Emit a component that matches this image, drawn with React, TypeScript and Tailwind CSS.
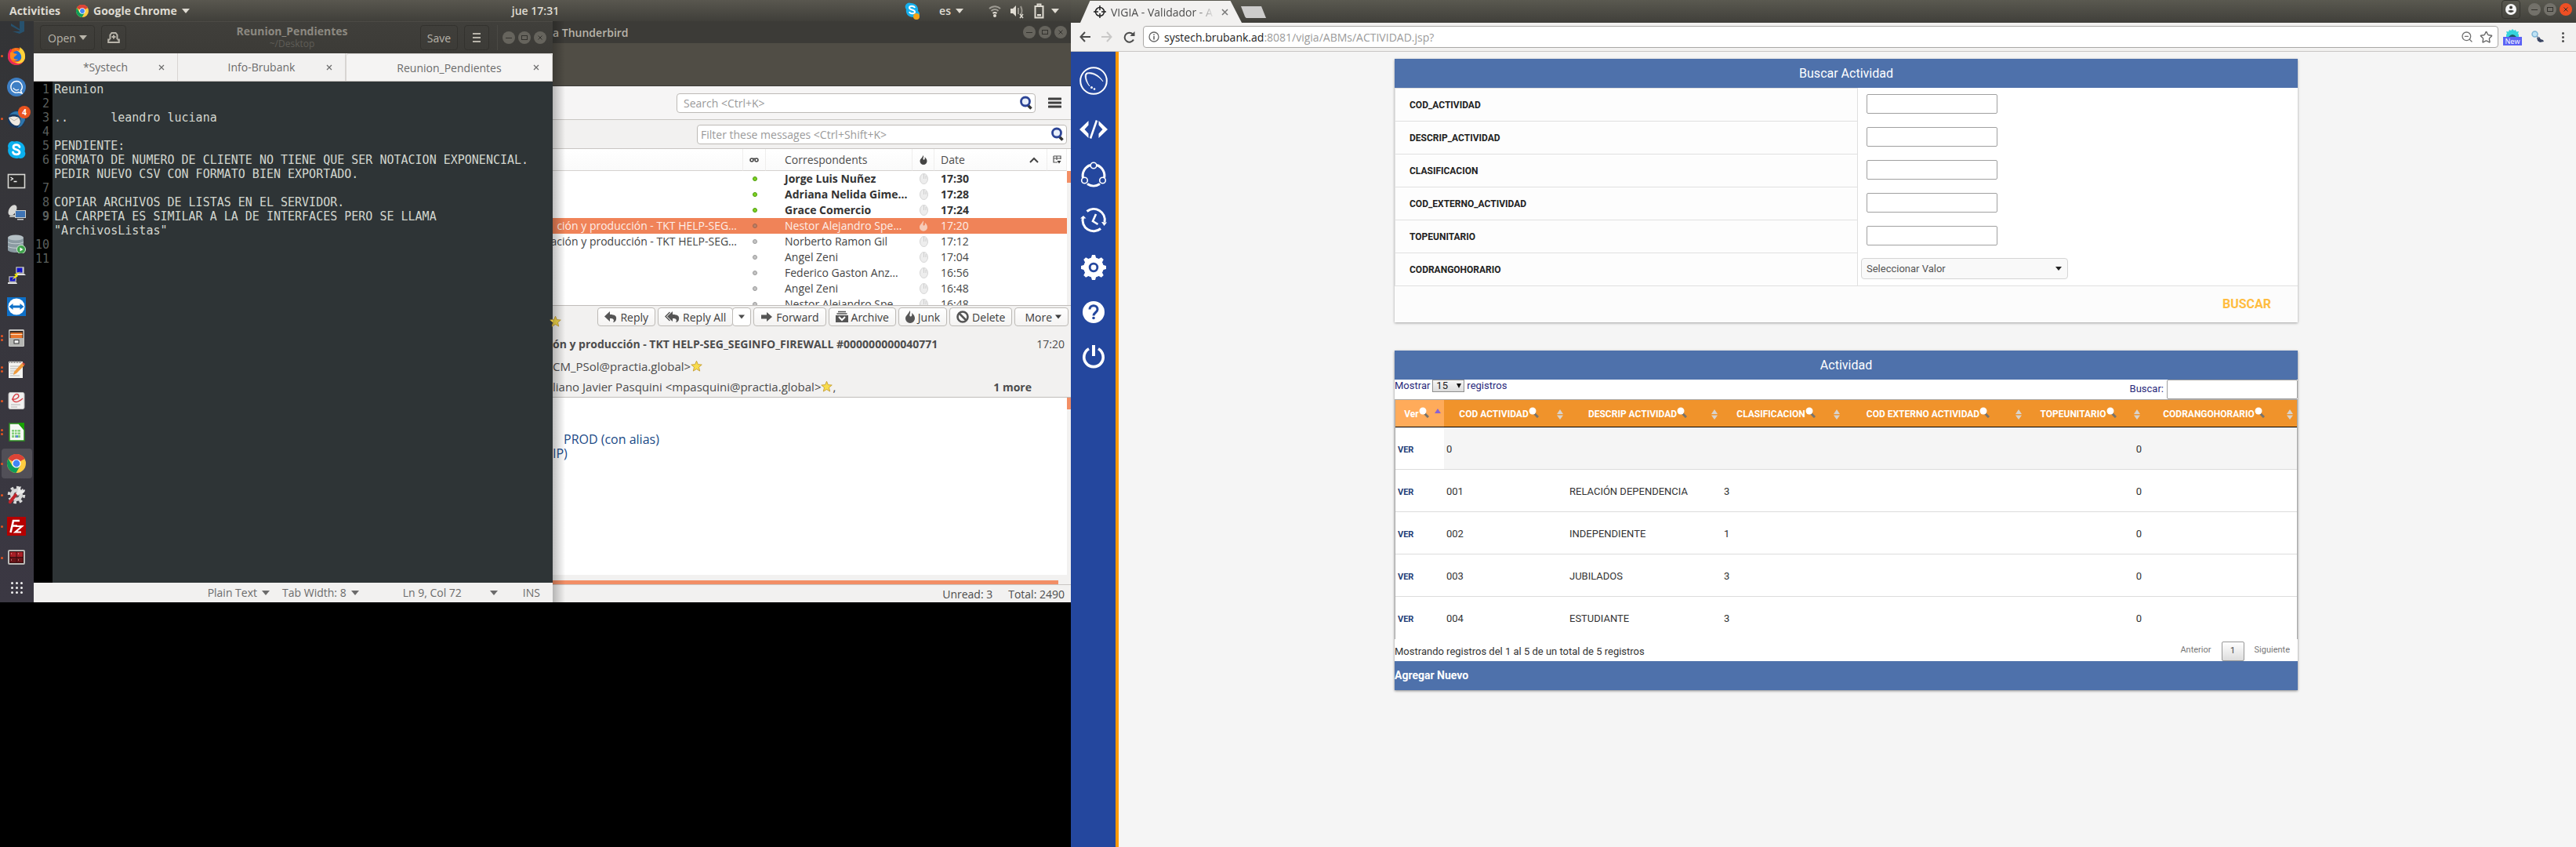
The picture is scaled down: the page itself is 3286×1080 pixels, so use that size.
import React from "react";
import { ZoomOut, Star } from "lucide-react";

type Kids = { children?: React.ReactNode };

/* ---------- shared small drawings ---------- */

function Caret({ className = "" }: { className?: string }) {
  return (
    <svg width="10" height="6" viewBox="0 0 10 6" className={"shrink-0 " + className} aria-hidden="true">
      <path d="M0 0h10L5 6z" fill="currentColor" />
    </svg>
  );
}

function ChromeLogo({ size }: { size: number }) {
  return (
    <svg width={size} height={size} viewBox="0 0 24 24" aria-hidden="true">
      <circle cx="12" cy="12" r="12" fill="#ffcd40" />
      <path d="M12 12 1.6 6A12 12 0 0 1 22.4 6z" fill="#db4437" />
      <path d="M12 0a12 12 0 0 1 10.4 6.5H12L6.5 9 1.6 6A12 12 0 0 1 12 0z" fill="#db4437" />
      <path d="M1.6 6A12 12 0 0 0 11.5 24l5.2-9.2-4.7 2L6.8 15z" fill="#0f9d58" />
      <circle cx="12" cy="12" r="5.6" fill="#fff" />
      <circle cx="12" cy="12" r="4.4" fill="#4285f4" />
    </svg>
  );
}

function WindowButtons({ tone }: { tone: "dim" | "active" }) {
  const face = tone === "dim" ? "#66645d" : "#73716a";
  const mark = "#33322e";
  return (
    <div className="flex gap-1">
      {["Minimize", "Maximize", "Close"].map((name, i) => (
        <button key={name} aria-label={name} className="block size-4">
          <svg width="16" height="16" viewBox="0 0 16 16">
            <circle cx="8" cy="8" r="8" fill={tone === "active" && i === 2 ? "#ee4f24" : face} />
            {i === 0 && <path d="M4 8.5h8" stroke={mark} />}
            {i === 1 && <rect x="4.500" y="5.500" width="7" height="5" fill="none" stroke={mark} />}
            {i === 2 && <path d="m5.500 5.500 5 5m0-5-5 5" stroke={mark} fill="none" />}
          </svg>
        </button>
      ))}
    </div>
  );
}

/* ---------- top bar ---------- */

function TopBar() {
  return (
    <header className="grid h-[27px] grid-cols-3 items-center bg-gradient-to-b from-[#59574f] to-[#403f3a] text-[14px] font-semibold text-[#dfdbd2]">
      <div className="flex items-center gap-5 pl-3 font-bold">
        <button>Activities</button>
        <button className="flex items-center gap-1.5">
          <ChromeLogo size={16} />
          Google Chrome
          <Caret />
        </button>
      </div>
      <div className="text-center">jue 17:31</div>
      <div className="flex items-center justify-end pr-[15px]">
        <svg width="20" height="24" viewBox="0 0 20 24" className="mr-6" role="img" aria-label="Skype">
          <path d="M1 5a5 5 0 0 1 7-3c6 0 10 5 9 10a5 5 0 0 1-6 8C4 20 1 15 2 10a5 5 0 0 1-1-5z" fill="#16b0ee" />
          <path d="M13 8c-1-3-7-3-7 0s7 2 7 5-6 3-7 0" fill="none" stroke="#fff" strokeWidth="2" />
          <circle cx="15" cy="19" r="4" fill="#f5a316" />
        </svg>
        <button className="mr-8 flex items-center gap-1.5">
          es
          <Caret />
        </button>
        <svg width="90" height="22" viewBox="0 0 90 22" role="img" aria-label="Network, sound and battery">
          <g fill="none" stroke="#dfdbd2" strokeWidth="2">
            <path d="M1 8a10 10 0 0 1 14 0M3.500 11a6 6 0 0 1 9 0" opacity=".55" />
            <path d="M5.500 14a4 4 0 0 1 5 0" />
            <path d="M38 7v8M41 5q3 6 0 11" opacity=".5" />
            <path d="m40 15 4 5m0-5-4 5" strokeWidth="1.500" />
            <path d="M59.500 5h10v14.500h-10zM62.500 4V2.500h4V4" />
          </g>
          <circle cx="8" cy="17" r="2" fill="#dfdbd2" />
          <path d="M28 8h3l4-4v14l-4-4h-3z" fill="#dfdbd2" />
          <path d="M62 15h5v2.500h-5z" fill="#dfdbd2" />
          <path d="M80 8h10l-5 6z" fill="#dfdbd2" />
        </svg>
      </div>
    </header>
  );
}

/* ---------- dock ---------- */

const dockItems: { name: string; dots: number; art: React.ReactNode; active?: boolean; badge?: string }[] = [
  {
    name: "Firefox",
    dots: 1,
    art: (
      <>
        <circle cx="12" cy="13" r="11" fill="#ff6a1a" />
        <path d="M1 13a11 11 0 0 0 20 6C14 24 6 22 4 15c-1-4 0-8 2-9L5 3C2 5 1 9 1 13z" fill="#e8265f" />
        <circle cx="12.500" cy="12.500" r="6.500" fill="#1f6fd6" />
        <path d="M9 3c3 0 4 3 6 4 2 2 4 5 3 9-1 3-4 5-8 4 6 5 14 0 13-8C23 6 19 3 16 1c1 2 0 4-1 5z" fill="#ffd23a" />
        <path d="M4 8c3-1 4 0 5 1l4 1-3 3c-3 1-1 5 4 3-3 4-9 2-10-2z" fill="#ff8a1f" />
      </>
    ),
  },
  {
    name: "Quassel",
    dots: 0,
    art: (
      <>
        <circle cx="12" cy="12" r="12" fill="#3e7fc4" />
        <path d="M12 4.500a7.300 7.300 0 1 0 3 14l4 1.500-1.500-3.500A7.300 7.300 0 0 0 12 4.500z" fill="none" stroke="#fff" strokeWidth="1.400" />
        <path d="M8 13a4.500 4.500 0 0 0 7 2" fill="none" stroke="#e6effa" strokeWidth="1.400" />
      </>
    ),
  },
  {
    name: "Thunderbird",
    dots: 1,
    badge: "4",
    art: (
      <>
        <circle cx="12" cy="13" r="11" fill="#17375e" />
        <path d="M3 8C8 1 18 2 22 8l1 6c-3 6-5 9-10 10 4-4 6-9 3-14-3-4-9-4-13-2z" fill="#2f77ad" />
        <path d="M2 11c4-2 9-2 13 0 3 4 2 8-1 10-5 1-10-3-12-10z" fill="#efe9e0" />
        <path d="m3 11 6 4 6-4" fill="none" stroke="#b9b2a8" />
      </>
    ),
  },
  {
    name: "Skype",
    dots: 0,
    art: (
      <>
        <path d="M1 7A6 6 0 0 1 9 1.500 10.500 10.500 0 0 1 22.500 14 6 6 0 0 1 15 22.500 10.500 10.500 0 0 1 1.500 10z" fill="#0bb0ee" />
        <path d="M16 8.500c-1-4-8-3.500-8 0 0 4 8 2.500 8 6.500 0 3.500-7.500 4-8.500 0" fill="none" stroke="#fff" strokeWidth="2.800" strokeLinecap="round" />
      </>
    ),
  },
  {
    name: "Terminal",
    dots: 0,
    art: (
      <>
        <rect x="1.500" y="3.500" width="21" height="17" fill="#2b2b2b" stroke="#d8d8d4" strokeWidth="1.600" />
        <path d="m4.500 7 3 2-3 2M8.500 12.500h4" fill="none" stroke="#f2f2f2" strokeWidth="1.300" />
      </>
    ),
  },
  {
    name: "Remmina",
    dots: 0,
    art: (
      <>
        <ellipse cx="7" cy="9" rx="4.500" ry="7.500" transform="rotate(32 7 9)" fill="#d9d9d6" />
        <path d="M4 15h7v3H3z" fill="#b9bab7" />
        <rect x="10.500" y="9.500" width="13" height="9" fill="#3e74b5" stroke="#ccd0d0" />
        <path d="M13 20h8v1.500h-8z" fill="#ccd0d0" />
      </>
    ),
  },
  {
    name: "Database tool",
    dots: 0,
    art: (
      <>
        <path d="M1 4v16c2 4 18 4 20 0V4z" fill="#8b9aa2" />
        <ellipse cx="11" cy="4" rx="10" ry="3.500" fill="#b5c0c5" />
        <path d="M1 9.500c3 3 17 3 20 0M1 15c3 3 17 3 20 0" fill="none" stroke="#c6d0d4" />
        <circle cx="18" cy="19" r="5.500" fill="#3fa24c" stroke="#cfe8d2" />
        <path d="m16.500 16.500 4 2.500-4 2.500z" fill="#fff" />
      </>
    ),
  },
  {
    name: "PuTTY",
    dots: 0,
    art: (
      <>
        <path d="M11 1h11v9H11zM2 13h10v8H2z" fill="#c9c9c9" stroke="#333" strokeWidth=".6" />
        <path d="M12.500 2.500h7v6h-7zM3.500 14.500h7v5h-7z" fill="#1212c8" />
        <path d="M13 10h9l2 2H12zM1 21h11l1 2H1z" fill="#e2e2e2" />
        <path d="m18 7-6 4 2 2-8 5 5-6-2-1z" fill="#fff200" />
      </>
    ),
  },
  {
    name: "TeamViewer",
    dots: 0,
    art: (
      <>
        <rect width="24" height="24" fill="#0e70c8" />
        <circle cx="12" cy="12" r="10.500" fill="#fff" />
        <path d="m2.500 12 5-4v2.500h9V8l5 4-5 4v-2.500h-9V16z" fill="#0e70c8" />
      </>
    ),
  },
  {
    name: "Files",
    dots: 2,
    art: (
      <>
        <rect x="2" y="1" width="20" height="22" rx="1.500" fill="#c8c8c5" />
        <rect x="3.500" y="3" width="17" height="9" fill="#3a2a20" />
        <path d="M4.500 5h15v7h-15z" fill="#e8762b" />
        <path d="M4.500 7.500h15" stroke="#ffe3c4" />
        <rect x="3" y="12" width="18" height="10" fill="#b4b5b2" />
        <rect x="9" y="14.500" width="6" height="4.500" fill="#eee" stroke="#333" />
      </>
    ),
  },
  {
    name: "Text Editor",
    dots: 2,
    art: (
      <>
        <rect x="2" y="2" width="18" height="21" fill="#f4f4f1" />
        <path d="M3 2.500h16" stroke="#777" strokeWidth="3" strokeDasharray="1 1" />
        <path d="M4 8h12M4 11h10M4 14h8M4 17h5M4 20h12" stroke="#b4b4b0" />
        <path d="m8 19 1-4L19 4l3 3-10 10z" fill="#ef9a3c" />
        <path d="m19 4 1-1 3 2-1 2z" fill="#d9463e" />
      </>
    ),
  },
  {
    name: "Document Viewer",
    dots: 1,
    art: (
      <>
        <rect x="2" y="1.500" width="20" height="21" rx="2" fill="#f0f0ef" stroke="#bbb" />
        <path d="M6 10c6 1 11-3 8-6-4-2-8 5-6 8 3 3 8 1 12-3" fill="none" stroke="#d8434a" strokeWidth="1.500" />
        <path d="M5 17h12M5 20h8" stroke="#b5b5b5" />
      </>
    ),
  },
  {
    name: "LibreOffice Calc",
    dots: 2,
    art: (
      <>
        <path d="M3 1h12l7 8v14H3z" fill="#f6f9f4" stroke="#2a8a1e" strokeWidth="1.500" />
        <path d="M14 0h8v10z" fill="#18a303" />
        <rect x="6" y="9" width="11" height="10" fill="#86cf7c" />
        <path d="M6 12h11M6 15.500h11M9.500 9v10M13 9v10" stroke="#fff" strokeWidth=".8" />
        <path d="M11 19v-3h3v3z" fill="#5b8ad0" />
      </>
    ),
  },
  { name: "Google Chrome", dots: 1, active: true, art: null },
  {
    name: "Settings",
    dots: 1,
    art: (
      <>
        <circle cx="12" cy="12" r="8" fill="#d9d9d9" />
        <circle cx="12" cy="12" r="9.500" fill="none" stroke="#d9d9d9" strokeWidth="3.500" strokeDasharray="3.700 3.700" />
        <circle cx="12" cy="12" r="3.500" fill="#5a5a5e" />
        <path d="m2 20 9-11 3 2L5 23c-2 1-4-1-3-3z" fill="#c02229" />
        <path d="m11 10 3-3c-1-3 1-5 4-6l-1 4 3 2 3-2c0 4-3 6-6 5l-3 3z" fill="#e9e9e9" />
      </>
    ),
  },
  {
    name: "FileZilla",
    dots: 1,
    art: (
      <>
        <rect width="24" height="24" fill="#b50000" />
        <g fill="none" stroke="#fff" strokeWidth="2.600">
          <path d="M16 5H8L4.500 20M6.500 11.500H13" />
          <path d="M11 12h8l-8.500 7.500H18" strokeWidth="2.200" />
        </g>
      </>
    ),
  },
  {
    name: "Terminator",
    dots: 1,
    art: (
      <>
        <rect x="1" y="2" width="22" height="19" rx="2" fill="#b9b9b6" />
        <rect x="3" y="4" width="18" height="15" fill="#3a0d10" />
        <path d="M4 5h7.500v6H4zM12.500 5H20v6h-7.500z" fill="#a81f26" />
        <path d="M4 12h7.500v6H4zM12.500 12H20v6h-7.500z" fill="#6a1418" />
        <path d="M5 7h1M14 7h1M5 15h1M14 15h1" stroke="#f0c0c0" />
      </>
    ),
  },
];

function Dock() {
  return (
    <nav aria-label="Dock" className="flex w-[43px] shrink-0 flex-col bg-gradient-to-b from-[#333436] to-[#3b3843]">
      <button aria-label="Visual Studio Code" className="flex h-6 items-start justify-center opacity-50">
        <svg width="20" height="16" viewBox="0 0 20 16">
          <path d="M2 3 13 10V0h6v13l-6 3-9-3h9v-1L2 6z" fill="#1d6fa5" />
        </svg>
      </button>
      {dockItems.map((item) => (
        <button
          key={item.name}
          aria-label={item.name}
          className="relative grid h-10 grid-cols-[9px_24px] items-center"
        >
          {item.active && <span className="absolute inset-x-0.5 inset-y-px rounded bg-white/12" />}
          <span className="relative flex flex-col items-center gap-0.5 pr-1">
            {Array.from({ length: item.dots }, (_, i) => (
              <span key={i} className="size-[3px] rounded-full bg-[#e95420]" />
            ))}
          </span>
          <span className="relative block">
            {item.art ? (
              <svg width="24" height="24" viewBox="0 0 24 24" aria-hidden="true">
                {item.art}
              </svg>
            ) : (
              <ChromeLogo size={24} />
            )}
            {item.badge && (
              <span className="absolute -top-1 left-3.5 flex size-4 items-center justify-center rounded-full bg-[#e95420] text-[10px] font-bold text-white">
                {item.badge}
              </span>
            )}
          </span>
        </button>
      ))}
      <button aria-label="Show Applications" className="grid flex-1 grid-cols-[3px_3px_3px] content-center justify-center gap-[3px]">
        {Array.from({ length: 9 }, (_, i) => (
          <span key={i} className="size-[3px] rounded-full bg-[#f2f2f2]" />
        ))}
      </button>
    </nav>
  );
}

/* ---------- text editor ---------- */

const noteText = `Reunion

..      leandro luciana

PENDIENTE:
FORMATO DE NUMERO DE CLIENTE NO TIENE QUE SER NOTACION EXPONENCIAL. PEDIR NUEVO CSV CON FORMATO BIEN EXPORTADO.

COPIAR ARCHIVOS DE LISTAS EN EL SERVIDOR.
LA CARPETA ES SIMILAR A LA DE INTERFACES PERO SE LLAMA "ArchivosListas"

`;

function EditorTab({ name, className, selected }: { name: string; className: string; selected?: boolean }) {
  return (
    <div
      className={
        "flex items-center border-r border-[#d8d5d2] pr-4 pl-6 " +
        className +
        (selected ? " rounded-t border-t border-l bg-[#f5f4f3]" : "")
      }
    >
      <button className="flex-1 text-center">{name}</button>
      <button aria-label={"Close " + name} className="size-2">
        <svg width="8" height="8" viewBox="0 0 8 8">
          <path d="m1 1 6 6m0-6L1 7" stroke="#6b6b6b" strokeWidth="1.200" />
        </svg>
      </button>
    </div>
  );
}

function TextEditor() {
  return (
    <section aria-label="Text Editor" className="flex w-[662px] shrink-0 flex-col">
      <div className="flex h-[41px] items-center border-t border-[#4c4a45] bg-gradient-to-b from-[#403f3b] to-[#3c3b37] pr-2 pl-2 text-[#b8b4aa]">
        <button className="flex h-8 w-[70px] items-center justify-center gap-1 rounded border border-[#33322e] text-[14px]">
          Open
          <Caret />
        </button>
        <button aria-label="New document" className="ml-2 flex h-8 w-8 items-center justify-center rounded border border-[#33322e]">
          <svg width="16" height="15" viewBox="0 0 16 15" fill="none" stroke="currentColor" strokeWidth="2">
            <path d="M3.500 9V3.500L5.500 1h5l2 2.500V9" />
            <path d="M8 3.500v5M5.500 6h5M3.500 9.500H1.200V13h13.600V9.500h-2.300" />
          </svg>
        </button>
        <div className="flex-1 pl-12 text-center">
          <div className="text-[14px] leading-4 font-bold text-[#8c8981]">Reunion_Pendientes</div>
          <div className="text-[12px] leading-4 text-[#5f5d57]">~/Desktop</div>
        </div>
        <button className="h-8 w-12 rounded border border-[#33322e] text-[14px]">Save</button>
        <button aria-label="Menu" className="mx-2 flex h-8 w-8 items-center justify-center rounded border border-[#33322e]">
          <svg width="10" height="12" viewBox="0 0 10 12">
            <path d="M0 1h10M0 6h10M0 11h10" stroke="currentColor" strokeWidth="2" />
          </svg>
        </button>
        <div className="ml-0.5 border-l border-[#4a4944] py-2 pl-1.5">
          <WindowButtons tone="dim" />
        </div>
      </div>
      <div className="flex h-9 border-b border-[#c8c4c0] bg-[#f2f1f0] text-[14px] text-[#6b6b6b]">
        <EditorTab name="*Systech" className="w-[184px]" />
        <EditorTab name="Info-Brubank" className="w-[214px]" />
        <EditorTab name="Reunion_Pendientes" className="flex-1" selected />
      </div>
      <div className="flex flex-1 bg-[#2e3436] font-['DejaVu_Sans_Mono',monospace] text-[15px] leading-[18px]">
        <pre className="w-6 bg-black pt-px pr-1 text-right font-['DejaVu_Sans_Mono',monospace] text-[#5b5f5d]">
          {"1\n2\n3\n4\n5\n6\n\n7\n8\n"}
          <b>9</b>
          {"\n\n10\n11"}
        </pre>
        <textarea
          aria-label="Reunion_Pendientes"
          spellCheck={false}
          defaultValue={noteText}
          className="block flex-1 resize-none overflow-hidden bg-transparent pt-px pl-0.5 text-[#d3d7cf] outline-none"
        />
      </div>
      <div className="flex h-[25px] items-center justify-end gap-4 bg-[#f2f1f0] pr-4 text-[14px] text-[#6b6b6b]">
        <button className="flex items-center gap-1.5">
          Plain Text
          <Caret />
        </button>
        <button className="flex items-center gap-1.5">
          Tab Width: 8
          <Caret />
        </button>
        <button className="ml-10 flex items-center gap-9">
          Ln 9, Col 72
          <Caret />
        </button>
        <span className="ml-4">INS</span>
      </div>
    </section>
  );
}

/* ---------- mail ---------- */

function Lens() {
  return (
    <svg width="18" height="18" viewBox="0 0 18 18" className="shrink-0" aria-hidden="true">
      <path d="m11 12 4.500 4.500" stroke="#333" strokeWidth="3.500" />
      <circle cx="8" cy="7.500" r="5.500" fill="#e8effa" stroke="#2d4596" strokeWidth="2.800" />
    </svg>
  );
}

function Flame({ color, className = "" }: { color: string; className?: string }) {
  return (
    <svg width="12" height="16" viewBox="0 0 12 16" className={className} aria-hidden="true">
      <path d="M5.500 0c2 3-1.500 5 .5 7.500C8 8 9 6 8 3c3 2 4 5 4 7a6 6 0 0 1-12 0c0-4 4-5 5.500-10z" fill={color} />
    </svg>
  );
}

function JunkDot() {
  return (
    <svg width="11" height="14" viewBox="0 0 11 14" aria-hidden="true">
      <ellipse cx="5.500" cy="7" rx="5" ry="6.500" fill="#ededed" stroke="#d4d4d4" />
      <path d="M5.500 1v6M8 3v4" stroke="#cfcfcf" />
    </svg>
  );
}

function GoldStar() {
  return (
    <svg width="15" height="16" viewBox="0 0 16 16" className="shrink-0" aria-hidden="true">
      <path d="m8 .8 2 4.700 5.200.4-4 3.400 1.300 5.200L8 11.800l-4.500 2.700 1.300-5.200-4-3.400L6 5.500z" fill="#f8dc4c" stroke="#c39a2c" strokeWidth=".9" />
    </svg>
  );
}

const subject = "ción y producción - TKT HELP-SEG…";
const mails = [
  { from: "Jorge Luis Nuñez", time: "17:30", unread: true },
  { from: "Adriana Nelida Gime…", time: "17:28", unread: true },
  { from: "Grace Comercio", time: "17:24", unread: true },
  { from: "Nestor Alejandro Spe…", time: "17:20", subject, selected: true },
  { from: "Norberto Ramon Gil", time: "17:12", subject: "a" + subject },
  { from: "Angel Zeni", time: "17:04" },
  { from: "Federico Gaston Anz…", time: "16:56" },
  { from: "Angel Zeni", time: "16:48" },
  { from: "Nestor Alejandro Spe…", time: "16:48" },
];

function MailButton({ children, label }: Kids & { label: string }) {
  return (
    <button className="flex h-6 items-center gap-1 rounded-sm border border-[#bdbab6] bg-gradient-to-b from-white to-[#f4f3f2] px-2 text-[14px] text-[#3c3c3c]">
      {children}
      {label}
    </button>
  );
}

function Reply({ all }: { all?: boolean }) {
  return (
    <svg width={all ? 19 : 16} height="16" viewBox={all ? "-3 0 19 16" : "0 0 16 16"} fill="#555" aria-hidden="true">
      <path d="M7 1v4c6 0 9 2 8 6 0 2-2 4-4 4 2-3 1-5-4-5v4L0 7.500z" />
      {all && <path d="M3.500 2-2 7.500 3.500 13" fill="none" stroke="#555" strokeWidth="1.500" />}
    </svg>
  );
}

function Mail() {
  return (
    <section aria-label="Mail" className="relative flex min-w-0 flex-1 flex-col bg-[#f2f1f0] text-[14px] text-[#4c4c4c]">
      <div className="pointer-events-none absolute inset-y-0 left-0 w-4 bg-gradient-to-r from-black/25 to-transparent" />
      <div className="flex h-7 items-center justify-between bg-[#3c3b37] pr-[5px] font-semibold text-[#b8b4aa]">
        <span>a Thunderbird</span>
        <WindowButtons tone="dim" />
      </div>
      <div className="h-[55px] border-b border-[#3c3b37] bg-[#504d45]" />
      <div className="flex h-[43px] items-center justify-end gap-4 border-b border-[#c9c6c3] bg-[#f6f5f5] pr-3">
        <label className="flex h-[25px] w-[458px] items-center rounded-sm border border-[#bdbab6] bg-white pr-0.5 pl-2">
          <input aria-label="Search" placeholder="Search <Ctrl+K>" className="min-w-0 flex-1 outline-none placeholder:text-[#9a9a9a]" />
          <Lens />
        </label>
        <button aria-label="Application menu">
          <svg width="17" height="14" viewBox="0 0 17 14">
            <path d="M1 2h15M1 7h15M1 12h15" stroke="#3f3f3f" strokeWidth="3" strokeLinecap="round" />
          </svg>
        </button>
      </div>
      <div className="flex h-[37px] items-center justify-end border-b border-[#c9c6c3] pr-[5px]">
        <label className="flex h-[25px] w-[472px] items-center rounded-sm border border-[#bdbab6] bg-white pr-0.5 pl-1">
          <input aria-label="Filter" placeholder="Filter these messages <Ctrl+Shift+K>" className="min-w-0 flex-1 outline-none placeholder:text-[#9a9a9a]" />
          <Lens />
        </label>
      </div>
      <div className="flex h-[200px] overflow-hidden border-b border-[#c0bdba] bg-white">
        <table className="w-full table-fixed self-start border-separate border-spacing-0">
          <colgroup>
            <col />
            <col className="w-[29px]" />
            <col className="w-[187px]" />
            <col className="w-7" />
            <col className="w-[144px]" />
            <col className="w-[25px]" />
          </colgroup>
          <thead>
            <tr className="h-[28px] bg-gradient-to-b from-white to-[#fafafa] text-left text-[#4c4c4c] *:border-r *:border-b *:border-b-[#d5d2cf] *:border-[#efeeed] *:p-0 *:font-normal">
              <th aria-label="Subject" />
              <th>
                <svg width="12" height="8" viewBox="0 0 12 8" className="mx-auto" role="img" aria-label="Read">
                  <path d="M1 4a2 2 0 1 0 4 0 2 2 0 1 0-4 0m6 0a2 2 0 1 0 4 0 2 2 0 1 0-4 0M4 3q2-1.500 4 0" fill="none" stroke="#444" strokeWidth="1.500" />
                </svg>
              </th>
              <th>
                <span className="pl-6">Correspondents</span>
              </th>
              <th>
                <Flame color="#444" className="mx-auto h-3 w-2.5" />
              </th>
              <th>
                <span className="flex items-center justify-between pr-2.5 pl-2">
                  Date
                  <svg width="12" height="8" viewBox="0 0 12 8" aria-hidden="true">
                    <path d="m1 7 5-5 5 5" fill="none" stroke="#444" strokeWidth="2" />
                  </svg>
                </span>
              </th>
              <th>
                <svg width="11" height="11" viewBox="0 0 11 11" className="mx-auto" role="img" aria-label="Select columns">
                  <path d="M1 1h9v4M1 1v8h5M1 4h9M5 1v5" fill="none" stroke="#555" strokeWidth="1.200" />
                  <path d="M5.500 7h5L8 10.500z" fill="#333" />
                </svg>
              </th>
            </tr>
          </thead>
          <tbody>
            {mails.map((m, i) => (
              <tr
                key={i}
                className={
                  "h-5 leading-5 whitespace-nowrap *:p-0 " +
                  (m.selected ? "bg-[#f08358] text-[#fdeee8]" : m.unread ? "font-bold text-[#333]" : "text-[#444]")
                }
              >
                <td>
                  <div className="flex justify-end pr-2">
                    <span>{m.subject}</span>
                  </div>
                </td>
                <td>
                  <span
                    className={
                      "mx-auto block size-[6px] rounded-full border " +
                      (m.unread ? "border-[#4b9a0c] bg-[#7ed321]" : m.selected ? "border-[#a5644a] bg-[#b98068]" : "border-[#9a9a9a] bg-[#c4c4c4]")
                    }
                  />
                </td>
                <td>
                  <span className="pl-6">{m.from}</span>
                </td>
                <td>
                  <div className="flex justify-center">{m.selected ? <Flame color="#f6cbb8" className="h-3.5 w-2.5" /> : <JunkDot />}</div>
                </td>
                <td>
                  <span className="pl-2">{m.time}</span>
                </td>
                <td />
              </tr>
            ))}
          </tbody>
        </table>
        <div className="mt-7 w-[5px] shrink-0 bg-[#f2f1f0]">
          <div className="h-[15px] bg-[#f28e65]" />
        </div>
      </div>
      <div className="flex h-[117px] flex-col border-b border-[#c0bdba]">
        <div className="flex h-8 items-center justify-between pr-[3px] pb-1">
          <div className="mt-3 -ml-1">
            <GoldStar />
          </div>
          <div className="flex gap-[3px]">
            <MailButton label="Reply">
              <Reply />
            </MailButton>
            <div className="flex">
              <MailButton label="Reply All">
                <Reply all />
              </MailButton>
              <button aria-label="Reply options" className="-ml-px flex h-6 w-6 items-center justify-center rounded-sm border border-[#bdbab6] bg-white">
                <Caret className="w-2" />
              </button>
            </div>
            <MailButton label="Forward">
              <svg width="16" height="14" viewBox="0 0 16 14" fill="#555" aria-hidden="true">
                <path d="M1 4.500h7V1l7 6-7 6V9.500H1z" />
              </svg>
            </MailButton>
            <MailButton label="Archive">
              <svg width="16" height="16" viewBox="0 0 16 16" aria-hidden="true">
                <path d="M3 1.500h10M1.500 4h13" stroke="#555" strokeWidth="1.400" />
                <path d="M0 6h16v9H0z" fill="#555" />
                <path d="m4 8 4 4 4-4" fill="none" stroke="#fff" strokeWidth="2" />
              </svg>
            </MailButton>
            <MailButton label="Junk">
              <Flame color="#555" />
            </MailButton>
            <MailButton label="Delete">
              <svg width="16" height="16" viewBox="0 0 16 16" fill="none" stroke="#555" strokeWidth="2.600" aria-hidden="true">
                <circle cx="8" cy="8" r="6.500" />
                <path d="m3.500 3.500 9 9" />
              </svg>
            </MailButton>
            <button className="flex h-6 items-center gap-1 rounded-sm border border-[#bdbab6] bg-gradient-to-b from-white to-[#f4f3f2] pr-2 pl-3 text-[#3c3c3c]">
              More
              <Caret className="w-2" />
            </button>
          </div>
        </div>
        <div className="flex h-8 items-center justify-between pr-2">
          <b className="font-bold whitespace-nowrap">ón y producción - TKT HELP-SEG_SEGINFO_FIREWALL #000000000040771</b>
          <span>17:20</span>
        </div>
        <div className="flex h-[26px] items-center text-[15px]">
          CM_PSol@practia.global&gt;
          <GoldStar />
        </div>
        <div className="flex h-[26px] items-center text-[15px]">
          liano Javier Pasquini &lt;mpasquini@practia.global&gt;
          <GoldStar />,
          <button className="mr-[50px] ml-auto text-[14px] font-bold">1 more</button>
        </div>
      </div>
      <div className="flex flex-1 bg-white">
        <div className="flex-1 pt-11 text-[16px] leading-[18px] text-[#204a87]">
          <p className="pl-3.5">PROD (con alias)</p>
          <p>IP)</p>
        </div>
        <div className="w-[5px] bg-[#f2f1f0]">
          <div className="h-[15px] bg-[#f28e65]" />
        </div>
      </div>
      <div className="flex h-[13px] items-end border-b border-[#c9c6c3] pr-4">
        <div className="h-[5px] flex-1 bg-[#f28e65]" />
      </div>
      <div className="flex h-[22px] items-center justify-end gap-5 pr-2">
        <span>Unread: 3</span>
        <span>Total: 2490</span>
      </div>
    </section>
  );
}

/* ---------- browser ---------- */

function BrowserChrome() {
  return (
    <header className="text-[14px]">
      <div className="flex h-[29px] items-end bg-gradient-to-b from-[#5a5950] to-[#403f3a] pr-[5px] pl-3">
        <div className="flex h-7 w-[206px] items-center bg-[#f2f1f0] pr-[17px] pl-[17px] text-[#4c4c4c] [clip-path:polygon(6%_0,93%_0,100%_100%,0_100%)]">
          <svg width="16" height="16" viewBox="0 0 16 16" className="mr-1.5 shrink-0" fill="none" stroke="#222" strokeWidth="1.500" aria-hidden="true">
            <circle cx="8" cy="8" r="5.500" />
            <path d="M8 0v6m0 4v6M0 8h6m4 0h6" />
          </svg>
          <span className="min-w-0 flex-1 overflow-hidden whitespace-nowrap [mask-image:linear-gradient(to_right,#000_80%,transparent)]">
            VIGIA - Validador - A
          </span>
          <button aria-label="Close tab" className="ml-2">
            <svg width="9" height="9" viewBox="0 0 9 9">
              <path d="m1 1 7 7m0-7L1 8" stroke="#777" strokeWidth="1.500" />
            </svg>
          </button>
        </div>
        <button aria-label="New tab" className="mb-1.5 -ml-px">
          <svg width="32" height="15" viewBox="0 0 32 15">
            <path d="M0 0h26l6 15H7q-1 0-2-2z" fill="#cdcccb" />
          </svg>
        </button>
        <div className="mb-[5px] ml-auto flex items-center gap-1.5">
          <button aria-label="Profile" className="mr-1 flex size-6 items-center justify-center rounded border border-[#35342f]">
            <svg width="14" height="14" viewBox="0 0 14 14">
              <circle cx="7" cy="7" r="7" fill="#f5f5f5" />
              <circle cx="7" cy="4.500" r="2" fill="#3f3e39" />
              <path d="M3 9q4-2 8 0-4 4-8 0z" fill="#3f3e39" />
            </svg>
          </button>
          <WindowButtons tone="active" />
        </div>
      </div>
      <div className="flex h-[37px] items-center border-b border-[#c8c6c4] bg-[#f2f1f0] pr-[13px] pl-[11px]">
        <button aria-label="Back" className="mr-3.5">
          <svg width="14" height="14" viewBox="0 0 14 14" fill="none" stroke="#4c4c4c" strokeWidth="2">
            <path d="M14 7H1.500M7 1 1.500 7 7 13" />
          </svg>
        </button>
        <button aria-label="Forward" className="mr-3.5">
          <svg width="14" height="14" viewBox="0 0 14 14" fill="none" stroke="#c9c8c7" strokeWidth="2">
            <path d="M0 7h12.500M7 1l5.500 6L7 13" />
          </svg>
        </button>
        <button aria-label="Reload" className="mr-2.5">
          <svg width="15" height="15" viewBox="0 0 15 15" fill="none" stroke="#4c4c4c" strokeWidth="2">
            <path d="M13 10.500A6 6 0 1 1 12 3.500" />
            <path d="M14.500 0v6h-6z" fill="#4c4c4c" stroke="none" />
          </svg>
        </button>
        <div className="flex h-7 flex-1 items-center rounded-sm border border-[#aaa8a6] bg-white pr-1.5 pl-1.5">
          <svg width="14" height="14" viewBox="0 0 14 14" className="mr-1.5" fill="none" stroke="#666" strokeWidth="1.300" aria-hidden="true">
            <circle cx="7" cy="7" r="6" />
            <path d="M7 6v4.500M7 3.500v1.400" strokeWidth="1.600" />
          </svg>
          <div
            role="textbox"
            aria-label="Address"
            tabIndex={0}
            className="flex-1 text-[#9a9a9a]"
          >
            <span className="text-[#222]">systech.brubank.ad</span>:8081/vigia/ABMs/ACTIVIDAD.jsp?
          </div>
          <button aria-label="Zoom">
            <ZoomOut size={16} color="#707070" strokeWidth={2} />
          </button>
          <button aria-label="Bookmark this page" className="ml-2">
            <Star size={17} color="#6a6a6a" strokeWidth={2} />
          </button>
        </div>
        <button className="ml-1.5 flex w-6 flex-col items-center">
          <svg width="16" height="11" viewBox="0 0 16 11" aria-hidden="true">
            <path d="M0 11V8l1-1-1-3 3 .5L4 2l2 1 2-2 2 2 2-1 1 2.500L16 4l-1 3 1 1v3z" fill="#35d3dc" />
            <path d="M3 11q5-6 10 0z" fill="#1c5b66" />
          </svg>
          <span className="w-full bg-[#5b62f5] text-center text-[9px] leading-[11px] text-white">New</span>
        </button>
        <button aria-label="Extension" className="ml-3">
          <svg width="16" height="16" viewBox="0 0 16 16">
            <path d="m7 9 3-1 2 3 3 1 1 2-5 1-3-2z" fill="#3b4563" />
            <path d="m6.500 6.500 3 3" stroke="#8090a8" strokeWidth="1.500" />
            <circle cx="4.500" cy="4.500" r="3.500" fill="#bfe2f5" stroke="#7fb4d6" strokeWidth="1.500" />
          </svg>
        </button>
        <button aria-label="Chrome menu" className="ml-5 flex w-2 flex-col items-center gap-0.5">
          <span className="size-[3px] rounded-full bg-[#4c4c4c]" />
          <span className="size-[3px] rounded-full bg-[#4c4c4c]" />
          <span className="size-[3px] rounded-full bg-[#4c4c4c]" />
        </button>
      </div>
    </header>
  );
}

const gearTeeth = [0, 45, 90, 135, 180, 225, 270, 315];

const sideIcons: { name: string; box: string; art: React.ReactNode }[] = [
  {
    name: "Inicio",
    box: "h-[74px]",
    art: (
      <>
        <circle cx="18" cy="18" r="16.800" fill="none" stroke="#fff" strokeWidth="2" />
        <path d="M30 19C25 10 16 6 9 8c-4 2-1 12 4 17C9 19 7 11 10 9c5-1 14 2 20 10z" fill="#fff" stroke="#fff" strokeWidth=".7" />
        <circle cx="15.500" cy="26.500" r="1.500" fill="#fff" />
        <circle cx="19" cy="28.500" r="1.300" fill="#fff" />
      </>
    ),
  },
  {
    name: "Código",
    box: "h-[50px]",
    art: (
      <>
        <path d="M11.500 7v5.500L6.500 18l5 5.500V29L0 18zM24.500 7v5.500l5 5.500-5 5.500V29L36 18z" fill="#fff" />
        <path d="M22 6.500 14 29.500" stroke="#fff" strokeWidth="2.600" />
      </>
    ),
  },
  {
    name: "Relaciones",
    box: "h-[66px]",
    art: (
      <g fill="none" stroke="#fff">
        <path d="M14 5.500A14 14 0 0 0 4.500 22M22 5.500A14 14 0 0 1 31.500 22M10 29.500a14 14 0 0 0 16 0" strokeWidth="3" />
        <circle cx="18" cy="6" r="3.800" strokeWidth="1.600" />
        <circle cx="6.500" cy="25" r="3.800" strokeWidth="1.600" />
        <circle cx="29.500" cy="25" r="3.800" strokeWidth="1.600" />
      </g>
    ),
  },
  {
    name: "Historial",
    box: "h-[50px]",
    art: (
      <>
        <g fill="none" stroke="#fff" strokeWidth="3">
          <path d="M9.500 6.500A14 14 0 0 1 32 20M27 28.500A14 14 0 0 1 4.500 14" />
          <path d="m21 10-4 9 6.500 4" strokeWidth="2.600" />
        </g>
        <path d="M1 15.500 5 12l3.500 3.500zM28 20l3.500 5 3.500-4.500z" fill="#fff" />
      </>
    ),
  },
  {
    name: "Configuración",
    box: "h-[70px]",
    art: (
      <>
        <circle cx="18" cy="18" r="9.500" fill="none" stroke="#fff" strokeWidth="6.500" />
        {gearTeeth.map((deg) => (
          <path key={deg} d="M14.500 7 16 2h4l1.500 5z" fill="#fff" transform={`rotate(${deg} 18 18)`} />
        ))}
        <circle cx="18" cy="18" r="3.400" fill="#fff" />
      </>
    ),
  },
  {
    name: "Ayuda",
    box: "h-11",
    art: (
      <>
        <circle cx="18" cy="18" r="14" fill="#fff" />
        <path d="M13 14.500c0-6.500 10-6.500 10 0 0 4-5 4-5 8" fill="none" stroke="#24479e" strokeWidth="3" />
        <circle cx="18" cy="25.500" r="1.800" fill="#24479e" />
      </>
    ),
  },
  {
    name: "Salir",
    box: "h-[72px]",
    art: (
      <>
        <path d="M12 6.800a12.200 12.200 0 1 0 12 0" fill="none" stroke="#fff" strokeWidth="3.600" />
        <path d="M18 2v14" stroke="#fff" strokeWidth="4" />
      </>
    ),
  },
];

function SideNav() {
  return (
    <nav aria-label="Menú" className="w-[61px] shrink-0 border-r-4 border-[#ff9900] bg-[#24479e]">
      {sideIcons.map((s) => (
        <a key={s.name} href="#" aria-label={s.name} className={"flex items-center justify-center " + s.box}>
          <svg width="36" height="36" viewBox="0 0 36 36" className="shrink-0">
            {s.art}
          </svg>
        </a>
      ))}
    </nav>
  );
}

const fields = ["COD_ACTIVIDAD", "DESCRIP_ACTIVIDAD", "CLASIFICACION", "COD_EXTERNO_ACTIVIDAD", "TOPEUNITARIO"];

function SearchCard() {
  return (
    <form className="bg-white shadow-[0_1px_3px_rgba(0,0,0,0.35)]">
      <h2 className="flex h-[37px] items-center justify-center bg-[#4e71ab] text-[16px] text-white">Buscar Actividad</h2>
      {fields.map((f) => (
        <div key={f} className="flex h-[42px]">
          <label
            htmlFor={f}
            className="flex w-[591px] items-center border-t border-r border-l border-[#e0e0e0] bg-[#fdfdfd] pl-[18px] text-[12px] font-bold text-[#222]"
          >
            {f}
          </label>
          <div className="pt-2 pl-[11px]">
            <input id={f} className="block h-[25px] w-[167px] rounded-xs border border-[#a0a0a0] bg-white px-1 text-[13px]" />
          </div>
        </div>
      ))}
      <div className="flex h-[42px]">
        <label
          htmlFor="rango"
          className="flex w-[591px] items-center border-t border-r border-l border-[#e0e0e0] bg-[#fdfdfd] pl-[18px] text-[12px] font-bold text-[#222]"
        >
          CODRANGOHORARIO
        </label>
        <div className="relative pt-[7px] pl-1">
          <select
            id="rango"
            className="block h-[27px] w-[264px] appearance-none rounded border border-[#d5d5d5] bg-[#f9f9f9] pl-1.5 text-[13px] text-[#555]"
          >
            <option>Seleccionar Valor</option>
          </select>
          <svg width="8" height="5" viewBox="0 0 8 5" className="pointer-events-none absolute top-[18px] right-2" aria-hidden="true">
            <path d="M0 0h8L4 5z" fill="#222" />
          </svg>
        </div>
      </div>
      <div className="flex h-[47px] items-center justify-end border-t border-[#e0e0e0] bg-[#fcfcfc] pr-[34px]">
        <button type="button" className="text-[16px] font-bold text-[#ffbc40]">
          BUSCAR
        </button>
      </div>
    </form>
  );
}

const columns = ["Ver", "COD ACTIVIDAD", "DESCRIP ACTIVIDAD", "CLASIFICACION", "COD EXTERNO ACTIVIDAD", "TOPEUNITARIO", "CODRANGOHORARIO"];
const rows = [
  ["0", "", "", "", "0", ""],
  ["001", "RELACIÓN DEPENDENCIA", "3", "", "0", ""],
  ["002", "INDEPENDIENTE", "1", "", "0", ""],
  ["003", "JUBILADOS", "3", "", "0", ""],
  ["004", "ESTUDIANTE", "3", "", "0", ""],
];

function HeadCell({ name, first }: { name: string; first?: boolean }) {
  return (
    <th className={"border-b border-black p-0 pt-0.5 " + (first ? "bg-[#ffab5a]" : "")}>
      <div className={"flex items-center justify-end " + (first ? "pr-1 pl-1" : "gap-1 pr-[5px]")}>
        <button className="flex flex-1 items-center justify-center whitespace-nowrap">
          {name}
          <svg width="13" height="14" viewBox="0 0 13 14" className="mb-1 shrink-0" aria-hidden="true">
            <path d="m7.500 8.500 4.500 4.500" stroke="#77736c" strokeWidth="3" />
            <circle cx="5" cy="5" r="4.500" fill="#fff" />
          </svg>
        </button>
        {first ? (
          <svg width="8" height="6" viewBox="0 0 8 6" className="mb-2 shrink-0" aria-hidden="true">
            <path d="M0 6h8L4 0z" fill="#8a63d2" />
          </svg>
        ) : (
          <svg width="8" height="13" viewBox="0 0 8 13" className="shrink-0" aria-hidden="true">
            <path d="M0 6h8L4 0zM0 7.500h8l-4 5.500z" fill="#d8d3cc" />
          </svg>
        )}
      </div>
    </th>
  );
}

function ResultsCard() {
  return (
    <section className="bg-white text-[13px] text-[#333] shadow-[0_1px_3px_rgba(0,0,0,0.45)]">
      <h2 className="flex h-[37px] items-center justify-center bg-[#4e71ab] text-[16px] text-white">Actividad</h2>
      <div className="flex h-[25px] items-start justify-between text-[#2a2a7c]">
        <label className="flex items-center gap-[3px] leading-4">
          Mostrar
          <span className="relative">
            <select
              defaultValue="15"
              className="block h-4 w-[41px] appearance-none border border-[#8f8f8f] bg-gradient-to-b from-[#f6f6f6] to-[#dcdcdc] pl-1 text-[13px] leading-3.5 text-[#222]"
            >
              <option>15</option>
            </select>
            <svg width="6" height="6" viewBox="0 0 6 6" className="pointer-events-none absolute top-[5px] right-1" aria-hidden="true">
              <path d="M0 0h6L3 6z" fill="#111" />
            </svg>
          </span>
          registros
        </label>
        <label className="flex items-center gap-1">
          <span className="pb-0.5">Buscar:</span>
          <input className="h-[25px] w-[167px] rounded-xs border border-[#a0a0a0] bg-white px-1" />
        </label>
      </div>
      <table className="w-full table-fixed border-separate border-spacing-0 border-x border-t border-[#aaa]">
        <colgroup>
          <col className="w-[62px]" />
          <col className="w-[157px]" />
          <col className="w-[197px]" />
          <col className="w-[156px]" />
          <col className="w-[232px]" />
          <col className="w-[151px]" />
          <col />
        </colgroup>
        <thead>
          <tr className="h-[35px] bg-[#f0932b] text-[12px] text-white">
            {columns.map((c, i) => (
              <HeadCell key={c} name={c} first={i === 0} />
            ))}
          </tr>
        </thead>
        <tbody>
          {rows.map((r, i) => (
            <tr
              key={r[0]}
              className={
                "h-[54px] *:px-[3px] *:pt-0.5 " +
                (i < rows.length - 1 ? "*:border-b *:border-[#dcdcdc] " : "") +
                (i === 0 ? "bg-[#f5f5f5]" : "")
              }
            >
              <td className="bg-white">
                <a href="#" className="text-[11px] font-bold text-[#1f3f77]">
                  VER
                </a>
              </td>
              {r.map((v, j) => (
                <td key={j} className={j === 4 ? "text-right" : ""}>
                  {v}
                </td>
              ))}
            </tr>
          ))}
        </tbody>
      </table>
      <div className="flex h-7 items-center justify-between">
        <span className="pt-1">Mostrando registros del 1 al 5 de un total de 5 registros</span>
        <div className="flex items-center pr-2.5 text-[11px] text-[#777]">
          <button>Anterior</button>
          <button className="mx-[13px] mt-[3px] h-[25px] w-[29px] rounded-xs border border-[#979797] bg-gradient-to-b from-white to-[#dcdcdc] text-[#444]">
            1
          </button>
          <button>Siguiente</button>
        </div>
      </div>
      <div className="flex h-[37px] items-center bg-[#4e71ab]">
        <button className="text-[14px] font-bold text-white">Agregar Nuevo</button>
      </div>
    </section>
  );
}

export default function App() {
  return (
    <div className="flex min-h-screen bg-black font-['Open_Sans',sans-serif]">
      <div className="flex w-[1366px] shrink-0 flex-col">
        <TopBar />
        <main className="flex h-[741px]">
          <Dock />
          <TextEditor />
          <Mail />
        </main>
      </div>
      <div className="flex min-w-0 flex-1 flex-col bg-[#f5f5f5]">
        <BrowserChrome />
        <div className="flex flex-1 font-[Roboto,sans-serif]">
          <SideNav />
          <main className="flex-1 pt-[9px] pr-[3px]">
            <div className="mx-auto flex max-w-[1152px] flex-col gap-9">
              <SearchCard />
              <ResultsCard />
            </div>
          </main>
        </div>
      </div>
    </div>
  );
}
